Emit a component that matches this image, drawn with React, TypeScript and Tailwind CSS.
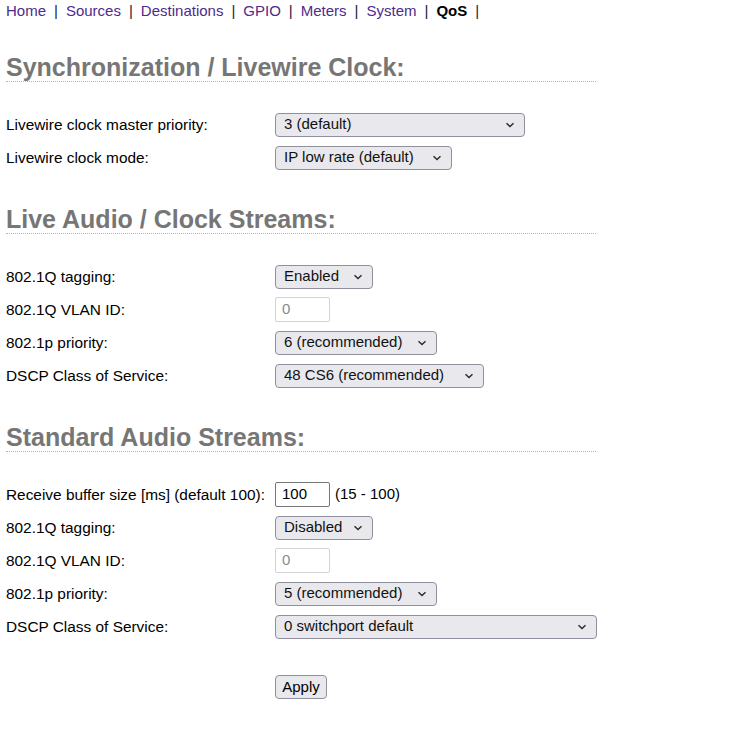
import React from "react";

const navLinks = ["Home", "Sources", "Destinations", "GPIO", "Meters", "System"];

const Chevron: React.FC = () => (
  <svg width="10" height="6" viewBox="0 0 10 6" className="shrink-0">
    <path d="M1.5 1.2 L5 4.6 L8.5 1.2" fill="none" stroke="#2b2b2b" strokeWidth="1.4" />
  </svg>
);

const Select: React.FC<{ value: string; className: string }> = ({ value, className }) => (
  <div
    className={`flex items-center justify-between h-[24px] pl-[8px] pr-[9px] border border-[#8f8f9d] rounded-[4px] bg-[#e9e9ed] text-[#111] ${className}`}
  >
    <span className="whitespace-nowrap">{value}</span>
    <Chevron />
  </div>
);

const TextInput: React.FC<{ value: string; disabled?: boolean }> = ({ value, disabled }) => (
  <div
    className={
      disabled
        ? "flex items-center h-[25px] w-[55px] px-[6px] border border-[#d3d3d6] rounded-[2px] bg-white text-[#8a8a8a]"
        : "flex items-center h-[25px] w-[55px] px-[6px] border border-[#767676] rounded-[2px] bg-white text-black"
    }
  >
    {value}
  </div>
);

const Row: React.FC<{ label: string; children: React.ReactNode }> = ({ label, children }) => (
  <div className="flex items-center h-[33px]">
    <div className="w-[269px] whitespace-nowrap text-[15.4px]">{label}</div>
    <div className="flex items-center">{children}</div>
  </div>
);

const Heading: React.FC<{ children: React.ReactNode }> = ({ children }) => (
  <h2 className="mt-[31px] mb-[26px] w-[590px] h-[29px] leading-[28px] text-[25px] font-bold text-[#767676] border-b border-dotted border-[#b5b5b5]">
    {children}
  </h2>
);

export default function App() {
  return (
    <div className="min-h-screen bg-white pl-[6px] text-[15px] text-black font-['Liberation_Sans',Arial,sans-serif]">
      <nav className="h-[22px] leading-[22px] whitespace-nowrap">
        {navLinks.map((l) => (
          <React.Fragment key={l}>
            <a className="text-[#4f2a8c]" href="#">
              {l}
            </a>
            <span className="px-[8px] text-[#1a1a40]">|</span>
          </React.Fragment>
        ))}
        <b className="text-black">QoS</b>
        <span className="px-[8px] text-[#1a1a40]">|</span>
      </nav>

      <Heading>Synchronization / Livewire Clock:</Heading>
      <Row label="Livewire clock master priority:">
        <Select value="3 (default)" className="w-[250px]" />
      </Row>
      <Row label="Livewire clock mode:">
        <Select value="IP low rate (default)" className="w-[177px]" />
      </Row>

      <Heading>Live Audio / Clock Streams:</Heading>
      <Row label="802.1Q tagging:">
        <Select value="Enabled" className="w-[98px]" />
      </Row>
      <Row label="802.1Q VLAN ID:">
        <TextInput value="0" disabled />
      </Row>
      <Row label="802.1p priority:">
        <Select value="6 (recommended)" className="w-[162px]" />
      </Row>
      <Row label="DSCP Class of Service:">
        <Select value="48 CS6 (recommended)" className="w-[209px]" />
      </Row>

      <Heading>Standard Audio Streams:</Heading>
      <Row label="Receive buffer size [ms] (default 100):">
        <TextInput value="100" />
        <span className="ml-[5px]">(15 - 100)</span>
      </Row>
      <Row label="802.1Q tagging:">
        <Select value="Disabled" className="w-[98px]" />
      </Row>
      <Row label="802.1Q VLAN ID:">
        <TextInput value="0" disabled />
      </Row>
      <Row label="802.1p priority:">
        <Select value="5 (recommended)" className="w-[162px]" />
      </Row>
      <Row label="DSCP Class of Service:">
        <Select value="0 switchport default" className="w-[322px]" />
      </Row>

      <div className="mt-[32px] pl-[269px] pb-[40px]">
        <button className="h-[24px] w-[52px] border border-[#8f8f9d] rounded-[4px] bg-[#e9e9ed] text-[15px] text-black">
          Apply
        </button>
      </div>
    </div>
  );
}
